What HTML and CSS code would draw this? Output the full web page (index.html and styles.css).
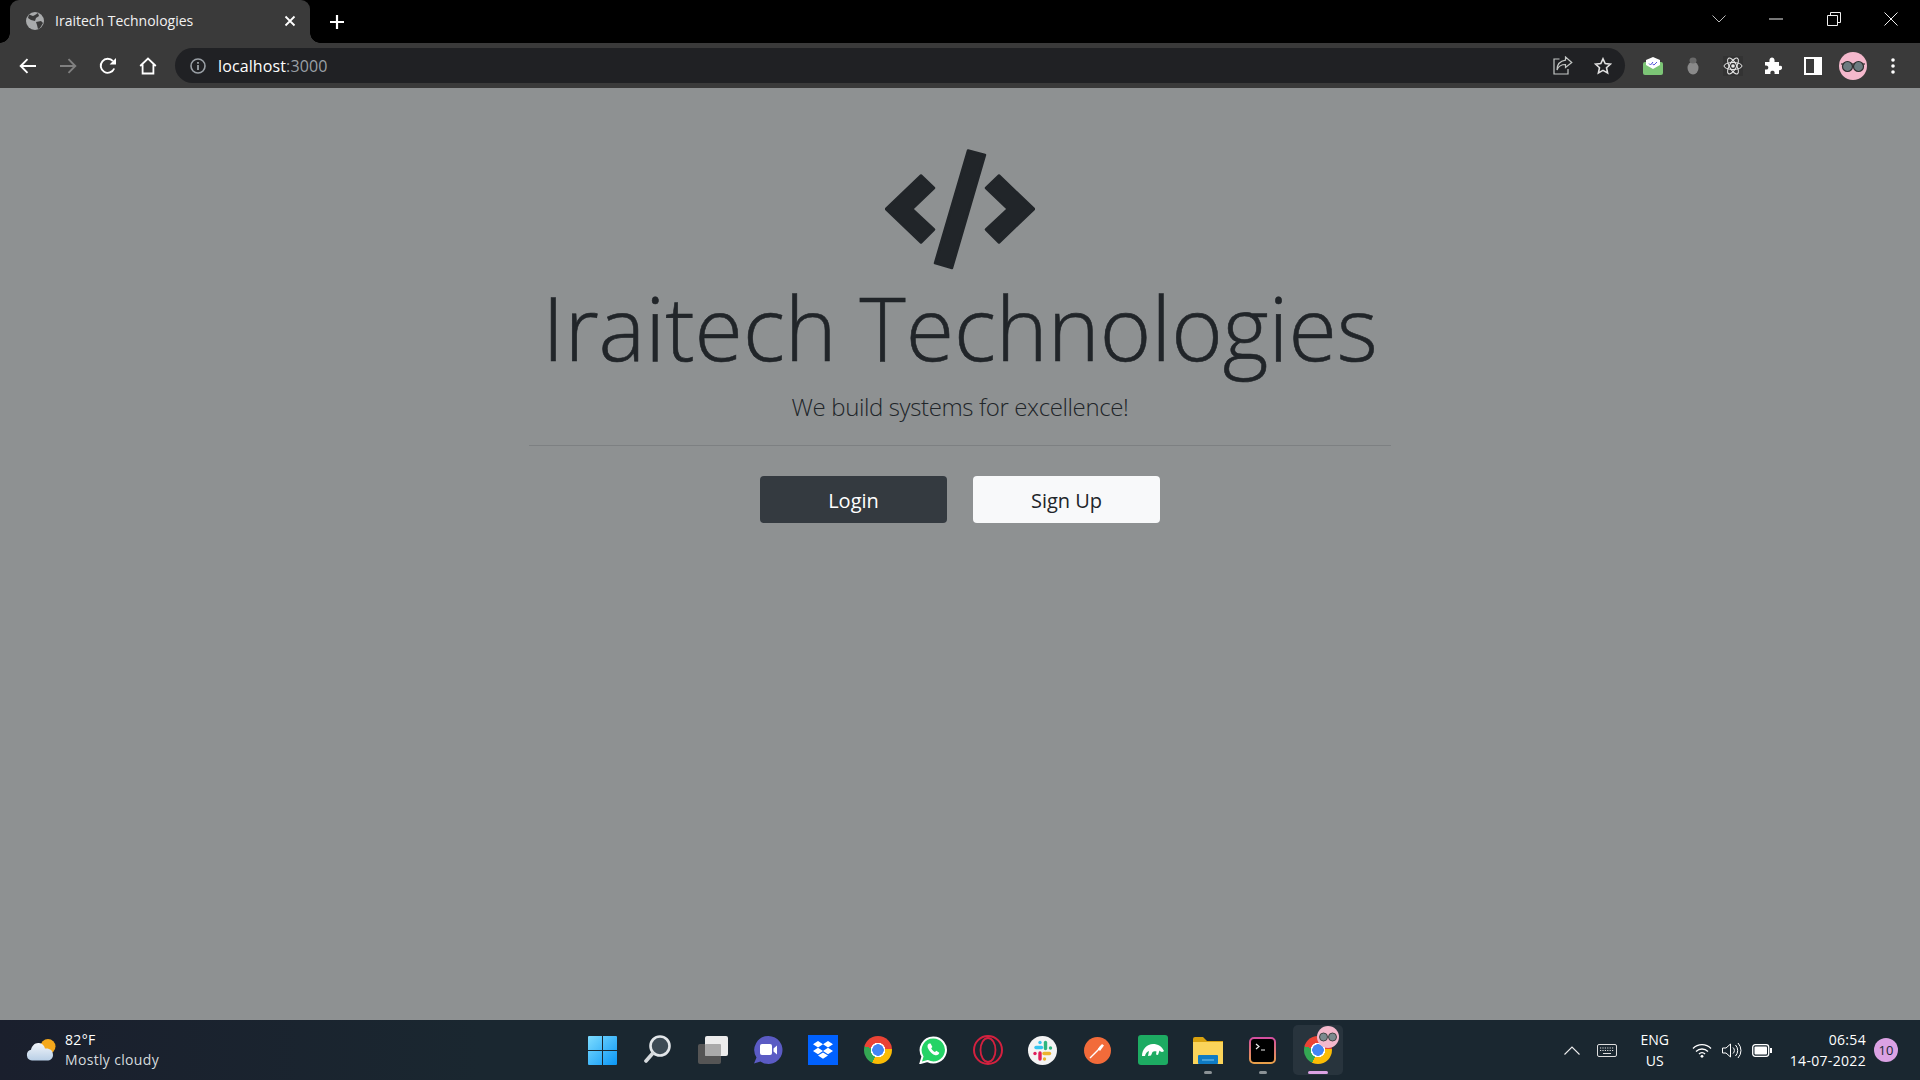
FILE: index.html
```html
<!DOCTYPE html>
<html lang="en">
<head>
<meta charset="utf-8">
<title>Iraitech Technologies</title>
<link rel="stylesheet" href="styles.css">
</head>
<body>
<div class="screen">
  <header class="tabstrip">
    <div class="tab">
      <svg class="favicon" viewBox="0 0 18 18"><circle cx="9" cy="9" r="9" fill="#a9abac"/><path d="M3 2.500l4 1.500 2-1 3-2 1 3-3 2-1 3-4-1-3-2zM10 10l5-1 2 2-3 5-2 1-1-4z" fill="#3a3a3a"/></svg>
      <span class="tab-title">Iraitech Technologies</span>
      <svg class="tab-close" viewBox="0 0 12 12"><path d="M1.500 1.500l9 9M10.500 1.500l-9 9" stroke="#fff" stroke-width="1.800" fill="none"/></svg>
    </div>
    <svg class="newtab" viewBox="0 0 16 16"><path d="M8 1v14M1 8h14" stroke="#fff" stroke-width="2.200" fill="none"/></svg>
    <div class="spacer"></div>
    <div class="winctl">
      <span class="wc"><svg width="14" height="8" viewBox="0 0 14 8"><path d="M.5.5L7 7 13.500.5" stroke="#bbb" fill="none"/></svg></span>
      <span class="wc"><svg width="14" height="2" viewBox="0 0 14 2"><path d="M0 1h14" stroke="#eee" fill="none"/></svg></span>
      <span class="wc"><svg width="14" height="14" viewBox="0 0 14 14"><path d="M.5 3.500h10v10H.5zM3.500 3.500v-3h10v10h-3" stroke="#eee" fill="none"/></svg></span>
      <span class="wc"><svg width="14" height="14" viewBox="0 0 14 14"><path d="M.5.5l13 13M13.500.5l-13 13" stroke="#eee" fill="none"/></svg></span>
    </div>
  </header>

  <nav class="toolbar">
    <span class="tb"><svg width="18" height="16" viewBox="0 0 18 16"><path d="M17 8H2M8.500 1.200L1.700 8l6.800 6.800" stroke="#fff" stroke-width="1.900" fill="none"/></svg></span>
    <span class="tb"><svg width="18" height="16" viewBox="0 0 18 16"><path d="M1 8h15M9.500 1.200L16.300 8l-6.800 6.800" stroke="#808080" stroke-width="1.900" fill="none"/></svg></span>
    <span class="tb"><svg width="18" height="18" viewBox="0 0 18 18"><path d="M15.200 11.500A7 7 0 1 1 14 4.200" stroke="#fff" stroke-width="1.900" fill="none"/><path d="M17 1v6.400h-6.400z" fill="#fff"/></svg></span>
    <span class="tb"><svg width="18" height="18" viewBox="0 0 18 18"><path d="M1.200 9L9 1.600 16.800 9M3.600 7.500V16.500h10.800V7.500" stroke="#fff" stroke-width="1.800" fill="none"/></svg></span>
    <div class="omnibox">
      <svg class="info" viewBox="0 0 16 16"><circle cx="8" cy="8" r="7" fill="none" stroke="#9aa0a6" stroke-width="1.600"/><path d="M8 7v5M8 4v1.800" stroke="#9aa0a6" stroke-width="1.800"/></svg>
      <span class="url">localhost<span class="url-port">:3000</span></span>
      <span class="spacer"></span>
      <span class="tb"><svg width="20" height="19" viewBox="0 0 20 19"><path d="M6.500 3H1v15h14v-5" stroke="#c4c7c5" stroke-width="1.200" fill="none"/><path d="M12.500 1L18.800 6.500 12.500 11.500V8.500C8.500 8.500 5.500 10 4 14 4 9 7 5 12.500 4.200z" stroke="#c4c7c5" stroke-width="1.200" fill="none"/></svg></span>
      <span class="tb"><svg width="18" height="18" viewBox="0 0 18 18"><path d="M9 1.800l2.200 4.800 5.200.6-3.900 3.500 1.100 5.200L9 13.300l-4.600 2.600 1.100-5.200-3.900-3.500 5.200-.6z" stroke="#e0e0e0" stroke-width="1.600" fill="none"/></svg></span>
    </div>
    <span class="tb"><svg width="21" height="20" viewBox="0 0 21 20"><rect y="6" width="20" height="13" rx="2" fill="#7cc576"/><path d="M3 9V4l7-3 7 3v5l-7 4z" fill="#fff"/><path d="M6 7.500l1.500 1.500L10 6M9.500 8L11 9 14 6" stroke="#5454d8" fill="none"/></svg></span>
    <span class="tb"><svg width="14" height="18" viewBox="0 0 14 18"><ellipse cx="7" cy="11" rx="5.500" ry="6.500" fill="#8a8a8a"/><ellipse cx="7" cy="3.500" rx="3.500" ry="3" fill="#6a6a6a"/></svg></span>
    <span class="tb"><svg width="20" height="20" viewBox="0 0 20 20"><rect width="20" height="20" fill="#333"/><g fill="none" stroke="#e8e8e8" stroke-width="1"><ellipse cx="10" cy="10" rx="9" ry="3.500"/><ellipse cx="10" cy="10" rx="9" ry="3.500" transform="rotate(60 10 10)"/><ellipse cx="10" cy="10" rx="9" ry="3.500" transform="rotate(120 10 10)"/></g><circle cx="10" cy="10" r="1.800" fill="#e8e8e8"/></svg></span>
    <span class="tb"><svg width="18" height="18" viewBox="0 0 18 18"><path d="M1 5h4.500C5 1.500 6.500.5 8 .5S11 1.500 10.500 5H15v4c3-.8 3.500 1 3 2.500S15.500 13.500 15 13v4H10.500c.6-2.600-.8-3.200-2-3.200S5.900 14.400 6.500 17H1v-4.500c2.600.5 3.300-.8 3.300-2S3.600 8 1 8.500z" fill="#fff"/></svg></span>
    <span class="tb"><svg width="18" height="18" viewBox="0 0 18 18"><path d="M0 0h18v18H0z" fill="#fff"/><path d="M2 2h8v14H2z" fill="#3a3a3a"/></svg></span>
    <span class="tb"><span class="avatar"><svg viewBox="0 0 28 28"><circle cx="14" cy="14" r="14" fill="#f4b8cc"/><path d="M2 12h24" stroke="#333" stroke-width="1.200"/><circle cx="8.500" cy="14.500" r="5" fill="#6d7b80" stroke="#2f2f2f" stroke-width="1.200"/><circle cx="19.500" cy="14.500" r="5" fill="#6d7b80" stroke="#2f2f2f" stroke-width="1.200"/></svg></span></span>
    <span class="tb"><svg width="4" height="16" viewBox="0 0 4 16"><circle cx="2" cy="2" r="1.800" fill="#fff"/><circle cx="2" cy="8" r="1.800" fill="#fff"/><circle cx="2" cy="14" r="1.800" fill="#fff"/></svg></span>
  </nav>

  <main class="page">
    <svg class="logo" viewBox="885 148 150 122"><path d="M921 175.500L934 188 912 209l22 20.500-13 13-35-33.500zM999 175.500L986 188l22 21-22 20.500 13 13 35-33.500zM968 150.500l17 4.500-33 113-17-5z" fill="#212529" stroke="#212529" stroke-width="2.500" stroke-linejoin="round"/></svg>
    <h1 class="title">Iraitech Technologies</h1>
    <p class="lead">We build systems for excellence!</p>
    <hr class="rule">
    <div class="actions">
      <a class="btn btn-dark">Login</a>
      <a class="btn btn-light">Sign Up</a>
    </div>
  </main>

  <footer class="taskbar">
    <div class="weather">
      <svg class="weather-icon" viewBox="0 0 30 24"><defs><linearGradient id="c" x1="0" y1="0" x2="0" y2="1"><stop offset="0" stop-color="#f2f5fa"/><stop offset="1" stop-color="#b9cfe6"/></linearGradient></defs><circle cx="22" cy="8.500" r="7.500" fill="#f5a81c"/><path d="M6 22.500a5.500 5.500 0 0 1-1-10.800C6 7.500 9 4.500 13 5c3 .4 5.500 2.500 6 5.500 4.500-.5 8 1.500 8 6.500 0 3.500-2.500 5.500-6 5.500z" fill="url(#c)"/></svg>
      <div class="weather-text"><span class="temp">82°F</span><span class="cond">Mostly cloudy</span></div>
    </div>
    <div class="apps">
      <span class="app"><svg width="29" height="29" viewBox="0 0 29 29"><defs><linearGradient id="w" x1="0" y1="0" x2="1" y2="1"><stop offset="0" stop-color="#7ddcff"/><stop offset="1" stop-color="#0a96f5"/></linearGradient></defs><path d="M0 1a1 1 0 0 1 1-1h13v14H0zM15 0h13a1 1 0 0 1 1 1v13H15zM0 15h14v14H1a1 1 0 0 1-1-1zM15 15h14v13a1 1 0 0 1-1 1H15z" fill="url(#w)"/></svg></span>
      <span class="app"><svg width="28" height="30" viewBox="0 0 28 30"><circle cx="16" cy="11" r="9.500" fill="#3c4a54" stroke="#e2e6e9" stroke-width="2.600"/><path d="M9 18l-7 8" stroke="#d6dadd" stroke-width="3.600" stroke-linecap="round"/></svg></span>
      <span class="app"><svg width="30" height="28" viewBox="0 0 30 28"><rect x="0" y="8" width="23" height="20" rx="2" fill="#555"/><rect x="7" y="0" width="23" height="20" rx="2" fill="#ececec"/><rect x="7" y="8" width="16" height="12" rx="1" fill="#aaa"/></svg></span>
      <span class="app"><svg width="30" height="30" viewBox="0 0 30 30"><path d="M15.500 1a14 14 0 1 1-8 25.500L1 28.500l2.500-6A14 14 0 0 1 15.500 1z" fill="#5b5bc4"/><rect x="7" y="9" width="12" height="11" rx="2" fill="#fff"/><path d="M20.500 13.500l3.500-3v9l-3.500-3z" fill="#fff"/></svg></span>
      <span class="app"><svg width="30" height="30" viewBox="0 0 30 30"><rect width="30" height="30" fill="#0061fe"/><path d="M10 6l5 3.200-5 3.200-5-3.200zM20 6l5 3.200-5 3.200-5-3.200zM10 12.800l5 3.200-5 3.200-5-3.200zM20 12.800l5 3.200-5 3.200-5-3.200zM15 17.400l5 3.200-5 3.200-5-3.200z" fill="#fff"/></svg></span>
      <span class="app"><span class="chrome"></span></span>
      <span class="app"><svg width="28" height="28" viewBox="0 0 28 28"><path d="M14.500 1.500a12.500 12.500 0 1 1-6 23.500L1.500 27 3.500 20.500A12.500 12.500 0 0 1 14.500 1.500z" fill="#25d366" stroke="#fff" stroke-width="2"/><path d="M10 7.500c-1.800 1-2 3.200-.5 5.800s4 5.500 7 6c2 .3 3.500-.8 3.800-2.500l-3-2-1.300 1.300c-1.500-.6-3-2.300-3.800-3.800l1.200-1.300-1.800-3.500z" fill="#fff"/></svg></span>
      <span class="app"><svg width="30" height="30" viewBox="0 0 30 30"><circle cx="15" cy="15" r="14" fill="none" stroke="#d4213f" stroke-width="2"/><ellipse cx="15" cy="15" rx="7.500" ry="12" fill="none" stroke="#d4213f" stroke-width="1.800"/></svg></span>
      <span class="app"><svg width="29" height="29" viewBox="0 0 29 29"><circle cx="14.500" cy="14.500" r="14.500" fill="#f4f4f4"/><g stroke-width="3.400" stroke-linecap="round"><path d="M8 11.500h5.500" stroke="#36c5f0"/><path d="M12 6.500v0" stroke="#36c5f0"/><path d="M17.500 6.500v6" stroke="#2eb67d"/><path d="M22.500 12h0" stroke="#2eb67d"/><path d="M16 17.500h5.500" stroke="#ecb22e"/><path d="M16.500 23h0" stroke="#ecb22e"/><path d="M12 17v6" stroke="#e01e5a"/><path d="M7 17.500h0" stroke="#e01e5a"/></g></svg></span>
      <span class="app"><svg width="27" height="27" viewBox="0 0 27 27"><circle cx="13.500" cy="13.500" r="13.500" fill="#f26b3a"/><path d="M6 21l8-8 3-4" stroke="#fff" stroke-width="1.400" fill="none"/><path d="M14 12l4-5 2 1.500-4 5.500z" fill="#fff"/></svg></span>
      <span class="app"><svg width="30" height="30" viewBox="0 0 30 30"><rect width="30" height="30" rx="3" fill="#1dab62"/><path d="M4 21c0-7 5-12 11-12 5 0 9 2.500 11 7-1.500 1.500-3.500 1-4.500-.5L20 20l-2-.5.500-3c-1.500-.5-3-.5-4 .5L13 20.500l-3 .5 1-5c-2 .5-3.500 2.500-4 5z" fill="#fff"/></svg></span>
      <span class="app"><svg width="30" height="27" viewBox="0 0 30 27"><path d="M0 2a2 2 0 0 1 2-2h8l4 4h16v6H0z" fill="#d9a20f"/><path d="M0 5h30v22H0z" fill="#fbd45a"/><rect x="5" y="18" width="20" height="9" rx="1" fill="#0f7bc4"/><path d="M9 23h12" stroke="#7cc7ef" stroke-width="1"/></svg><span class="dot"></span></span>
      <span class="app"><svg width="27" height="27" viewBox="0 0 27 27"><defs><linearGradient id="t" x1="0" y1="0" x2="0" y2="1"><stop offset="0" stop-color="#d44fa0"/><stop offset="1" stop-color="#e8a04a"/></linearGradient></defs><rect x="1" y="1" width="25" height="25" rx="4" fill="#000" stroke="url(#t)" stroke-width="2"/><path d="M7 7l3 2.500L7 12M12 13h4" stroke="#eee" stroke-width="1.200" fill="none"/></svg><span class="dot"></span></span>
      <span class="app app-active"><span class="chrome"></span><svg class="chrome-badge" viewBox="0 0 22 22"><circle cx="11" cy="11" r="11" fill="#f4b8cc"/><circle cx="6.500" cy="11" r="4" fill="#7b8a8e" stroke="#444"/><circle cx="15.500" cy="11" r="4" fill="#7b8a8e" stroke="#444"/></svg><span class="dot dot-active"></span></span>
    </div>
    <div class="tray">
      <span class="tray-i"><svg width="16" height="9" viewBox="0 0 16 9"><path d="M.5 8.500L8 1l7.500 7.500" stroke="#eee" stroke-width="1.100" fill="none"/></svg></span>
      <span class="tray-i"><svg width="20" height="13" viewBox="0 0 20 13"><rect x=".5" y=".5" width="19" height="12" rx="1.500" fill="none" stroke="#ddd"/><path d="M3 4h14M3 6.500h14" stroke="#ddd" stroke-dasharray="1.200 1.200"/><path d="M6 9.500h8" stroke="#ddd"/></svg></span>
      <div class="lang"><span>ENG</span><span>US</span></div>
      <span class="tray-s"><svg width="20" height="15" viewBox="0 0 20 15"><path d="M1 5.500a12.500 12.500 0 0 1 18 0M4 8.500a8.500 8.500 0 0 1 12 0M7 11a4 4 0 0 1 6 0" stroke="#fff" stroke-width="1.300" fill="none"/><circle cx="10" cy="13.300" r="1.400" fill="#fff"/></svg></span>
      <span class="tray-s"><svg width="20" height="17" viewBox="0 0 20 17"><path d="M.5 6h3.500L8.500 2v13L4 11H.5z" stroke="#fff" fill="none"/><path d="M11 5.500a4 4 0 0 1 0 6M13.500 3a8 8 0 0 1 0 11M16 1a11 11 0 0 1 0 15" stroke="#fff" fill="none"/></svg></span>
      <span class="tray-s"><svg width="20" height="13" viewBox="0 0 20 13"><rect x=".7" y=".7" width="16" height="11.600" rx="2.500" fill="none" stroke="#fff" stroke-width="1.300"/><rect x="2.500" y="2.500" width="12.500" height="8" rx="1" fill="#fff"/><rect x="18" y="4" width="2" height="5" fill="#fff"/></svg></span>
      <div class="clock"><span>06:54</span><span>14-07-2022</span></div>
      <span class="badge">10</span>
    </div>
  </footer>
</div>
</body>
</html>
```

FILE: styles.css
```css
* { box-sizing: border-box; }
html, body { margin: 0; padding: 0; height: 100%; }
body { font-family: "Open Sans", "Noto Sans", sans-serif; background: #8e9192; color: #212529; overflow: hidden; }
.screen { display: flex; flex-direction: column; height: 1080px; }
.spacer { flex: 1; }

.tabstrip { display: flex; align-items: center; height: 43px; background: #000; flex: none; }
.tab { position: relative; display: flex; align-items: center; width: 300px; height: 43px; margin-left: 10px; padding: 0 14px 2px 16px; background: #3a3a3a; border-radius: 9px 9px 0 0; color: #f2f2f2; }
.tab::before, .tab::after { content: ""; position: absolute; bottom: 0; width: 10px; height: 10px; }
.tab::before { left: -10px; background: radial-gradient(circle at 0 0, #000 9.500px, #3a3a3a 10px); }
.tab::after { right: -10px; background: radial-gradient(circle at 100% 0, #000 9.500px, #3a3a3a 10px); }
.favicon { width: 18px; height: 18px; flex: none; }
.tab-title { margin-left: 11px; font-size: 14px; white-space: nowrap; flex: 1; }
.tab-close { width: 12px; height: 12px; flex: none; }
.newtab { width: 16px; height: 16px; margin-left: 19px; flex: none; }
.winctl { display: flex; align-self: flex-start; height: 38px; }
.wc { display: flex; align-items: center; justify-content: center; width: 57.500px; height: 38px; }

.toolbar { display: flex; align-items: center; height: 45px; padding: 0 7px 0 8px; background: #3a3a3a; flex: none; }
.tb { display: flex; align-items: center; justify-content: center; width: 40px; height: 35px; flex: none; }
.omnibox { display: flex; align-items: center; flex: 1; height: 35px; margin: 0 8px 0 7px; padding: 0 2px 0 15px; background: #202124; border-radius: 18px; }
.info { width: 16px; height: 16px; flex: none; }
.url { margin-left: 12px; font-size: 16px; letter-spacing: 0.12px; color: #fff; white-space: nowrap; }
.url-port { color: #9aa0a6; }
.avatar { display: block; width: 28px; height: 28px; }
.avatar svg { display: block; width: 28px; height: 28px; }

.page { flex: 1; display: flex; flex-direction: column; align-items: center; padding-top: 60px; background: #8e9192; }
.logo { display: block; width: 150px; height: 122px; flex: none; }
.title { margin: 4px 0 0; font-size: 88px; font-weight: 300; -webkit-text-stroke: 0.6px #212529; line-height: 106px; color: #212529; white-space: nowrap; }
.lead { margin: 9px 0 0; font-size: 24px; font-weight: 300; letter-spacing: -0.38px; line-height: 36px; color: #212529; white-space: nowrap; }
.rule { width: 862px; height: 1px; margin: 20px 0 0; border: 0; background: #7d8082; }
.actions { display: flex; gap: 26px; margin-top: 30px; }
.btn { display: flex; align-items: center; justify-content: center; width: 187px; height: 47px; padding-top: 1px; border-radius: 4px; font-size: 20px; }
.btn-dark { background: #343a40; color: #fff; }
.btn-light { background: #f8f9fa; color: #212529; }

.taskbar { display: grid; grid-template-columns: 1fr auto 1fr; align-items: center; height: 60px; flex: none; background: linear-gradient(90deg, #1a1f2d, #1a2730 25%, #1a2730); color: #fff; }
.weather { display: flex; align-items: center; padding-left: 26px; }
.weather-icon { width: 30px; height: 24px; flex: none; }
.weather-text { display: flex; flex-direction: column; margin-left: 9px; font-size: 14px; letter-spacing: 0.33px; line-height: 20px; }
.temp { color: #fff; }
.cond { color: #d5dadd; }
.apps { display: flex; height: 60px; }
.app { position: relative; display: flex; align-items: center; justify-content: center; width: 55px; height: 60px; }
.app-active::before { content: ""; position: absolute; left: 3px; right: 2px; top: 5px; bottom: 5px; background: #28343d; border-radius: 5px; }
.chrome { position: relative; display: block; width: 28px; height: 28px; border-radius: 50%; background: radial-gradient(circle, #4285f4 0 5.500px, #fff 6px 7px, transparent 7.500px), conic-gradient(#ea4335 0 85deg, #fbbc05 85deg 205deg, #34a853 205deg 285deg, #ea4335 285deg); }
.chrome-badge { position: absolute; left: 27px; top: 6px; width: 22px; height: 22px; }
.dot { position: absolute; left: 50%; bottom: 6px; width: 8px; height: 3px; margin-left: -4px; border-radius: 2px; background: #8b9296; }
.dot-active { width: 20px; margin-left: -10px; background: #dba2e4; }
.tray { display: flex; align-items: center; justify-content: flex-end; padding-right: 22px; font-size: 14px; }
.tray-i { display: flex; align-items: center; justify-content: center; width: 35px; }
.tray-s { display: flex; align-items: center; justify-content: center; width: 30px; }
.lang { display: flex; flex-direction: column; align-items: center; width: 50px; margin-right: 7px; margin-left: 5.500px; line-height: 21px; }
.clock { display: flex; flex-direction: column; align-items: flex-end; margin-left: 13px; letter-spacing: 0.32px; line-height: 21px; }
.badge { display: flex; align-items: center; justify-content: center; width: 24px; height: 24px; margin-left: 8px; border-radius: 50%; background: #dba2e4; color: #1a2730; font-size: 13px; }
```
